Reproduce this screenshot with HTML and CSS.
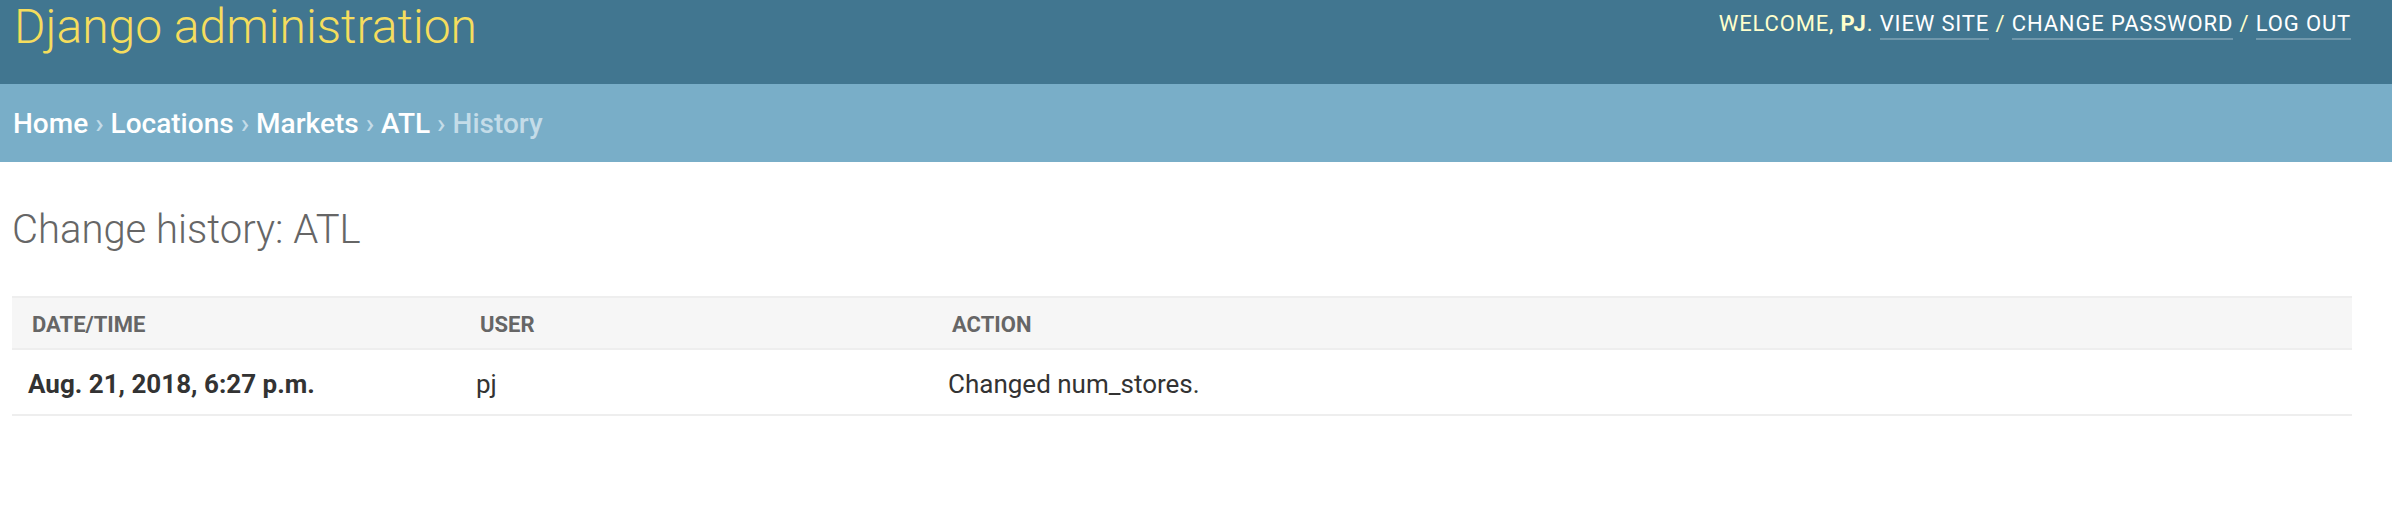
FILE: index.html
```html
<!DOCTYPE html>
<html lang="en">
<head>
<meta charset="utf-8">
<title>Change history: ATL | Django site admin</title>
<link rel="stylesheet" href="styles.css">
</head>
<body>
<div class="header">
  <div class="branding">Django administration</div>
  <div class="user-tools">
    Welcome, <strong>pj</strong>. <a href="#">View site</a> / <a href="#">Change password</a> / <a href="#">Log out</a>
  </div>
</div>
<div class="breadcrumbs">
  <a href="#">Home</a><span class="sep">›</span><a href="#">Locations</a><span class="sep">›</span><a href="#">Markets</a><span class="sep">›</span><a href="#">ATL</a><span class="sep">›</span><span class="current">History</span>
</div>
<div class="content">
  <h1 class="title">Change history: ATL</h1>
  <table class="history">
    <thead>
      <tr>
        <th class="col-date">Date/time</th>
        <th class="col-user">User</th>
        <th class="col-action">Action</th>
      </tr>
    </thead>
    <tbody>
      <tr>
        <th class="row-date">Aug. 21, 2018, 6:27 p.m.</th>
        <td>pj</td>
        <td>Changed num_stores.</td>
      </tr>
    </tbody>
  </table>
</div>
</body>
</html>
```
FILE: styles.css
```css
html, body {
  margin: 0;
  padding: 0;
  background: #fff;
  font-family: Roboto, "Liberation Sans", sans-serif;
  color: #333;
}

.header {
  display: flex;
  justify-content: space-between;
  align-items: flex-start;
  height: 84px;
  background: #417690;
  padding: 0 41px 0 14px;
  box-sizing: border-box;
}

.branding {
  font-size: 48px;
  line-height: 54px;
  font-weight: 300;
  color: #f5dd5d;
}

.user-tools {
  padding-top: 10px;
  font-size: 22px;
  line-height: 28px;
  letter-spacing: 0.85px;
  text-transform: uppercase;
  color: #ffc;
  font-weight: 400;
}

.user-tools strong {
  font-weight: 700;
}

.user-tools a {
  color: #fff;
  text-decoration: none;
  border-bottom: 2px solid rgba(255, 255, 255, 0.25);
  padding-bottom: 2px;
}

.breadcrumbs {
  display: flex;
  align-items: center;
  height: 78px;
  background: #79aec8;
  padding: 0 13px;
  font-size: 28px;
  font-weight: 500;
  color: #c4dce8;
}

.breadcrumbs a {
  color: #fff;
  text-decoration: none;
}

.breadcrumbs .sep {
  margin: 0 7px;
}

.content {
  padding: 44px 40px 0 12px;
}

.title {
  margin: 0 0 42px;
  font-size: 40px;
  line-height: 48px;
  font-weight: 300;
  color: #666;
}

.history {
  width: 100%;
  border-collapse: collapse;
}

.history thead th {
  background: #f6f6f6;
  border-top: 2px solid #eee;
  border-bottom: 2px solid #eee;
  padding: 12px 20px 8px;
  line-height: 30px;
  font-size: 22px;
  font-weight: 700;
  text-transform: uppercase;
  color: #666;
  text-align: left;
}

.history .col-date { width: 448px; box-sizing: border-box; }
.history .col-user { width: 472px; box-sizing: border-box; }

.history tbody th,
.history tbody td {
  padding: 18px 16px 14px;
  line-height: 32px;
  font-size: 26px;
  color: #333;
  text-align: left;
  border-bottom: 2px solid #eee;
}

.history tbody th {
  font-weight: 700;
}

.history tbody td {
  font-weight: 400;
}
```
